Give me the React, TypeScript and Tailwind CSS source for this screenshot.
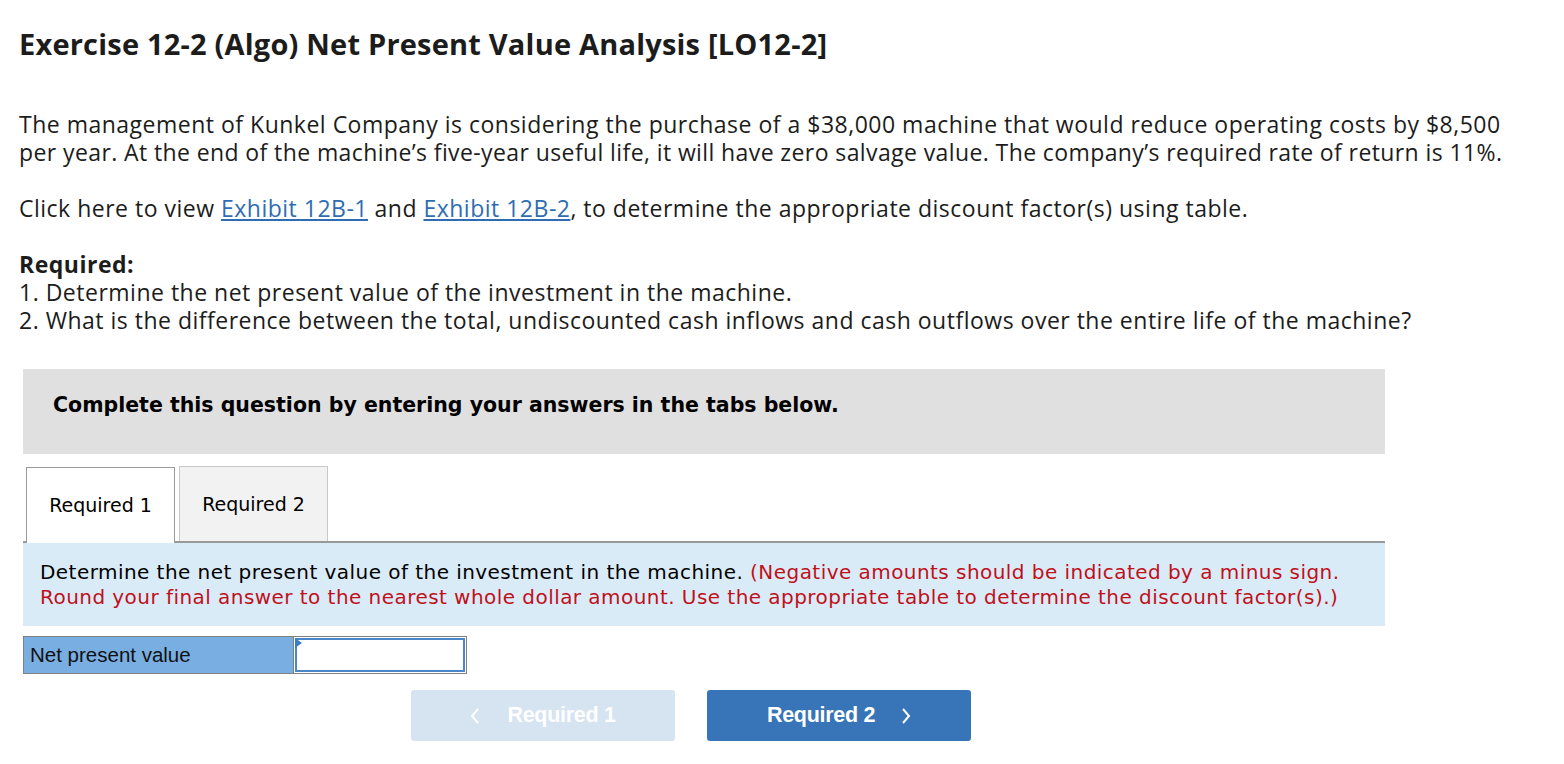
export default function App() {
  return (
    <div className="min-h-screen bg-white text-[#1c1c1c] font-['Open_Sans',sans-serif] px-[19px]">
      {/* Heading */}
      <h1 className="pt-[26px] text-[29px] font-bold leading-[36px] tracking-[0.2px] whitespace-nowrap">
        Exercise 12-2 (Algo) Net Present Value Analysis [LO12-2]
      </h1>

      {/* Problem text */}
      <div className="mt-[48px] text-[23px] leading-[28px] tracking-[0.5px] whitespace-nowrap">
        <p>
          The management of Kunkel Company is considering the purchase of a $38,000 machine that would reduce operating costs by $8,500
          <br />
          <span className="tracking-[0.4px]">
            per year. At the end of the machine’s five-year useful life, it will have zero salvage value. The company’s required rate of return is 11%.
          </span>
        </p>
        <p className="mt-[28px]">
          Click here to view{" "}
          <a href="#" className="text-[#2e6db4] underline underline-offset-2">Exhibit 12B-1</a> and{" "}
          <a href="#" className="text-[#2e6db4] underline underline-offset-2">Exhibit 12B-2</a>, to determine the appropriate discount factor(s) using table.
        </p>
        <div className="mt-[28px]">
          <p className="font-bold">Required:</p>
          <p>1. Determine the net present value of the investment in the machine.</p>
          <p>2. What is the difference between the total, undiscounted cash inflows and cash outflows over the entire life of the machine?</p>
        </div>
      </div>

      {/* Question panel */}
      <div className="ml-[4px] w-[1362px] mt-[35px] font-['DejaVu_Sans',Verdana,sans-serif]">
        <div className="h-[85px] bg-[#e0e0e0] flex items-center px-[30px] pb-[12px]">
          <p className="text-[20.5px] font-bold text-black">Complete this question by entering your answers in the tabs below.</p>
        </div>

        {/* Tabs */}
        <div className="mt-[12px] flex items-end gap-[4px] border-b-2 border-[#999999] pl-[3px]">
          <button className="h-[76px] w-[149px] -mb-[2px] bg-white border border-b-0 border-[#999999] text-[19px] text-black">
            Required 1
          </button>
          <button className="h-[75px] w-[149px] bg-[#f2f2f2] border border-b-0 border-[#c8c8c8] text-[19px] text-black">
            Required 2
          </button>
        </div>

        {/* Instructions */}
        <div className="h-[83px] bg-[#daebf8] px-[17px] pt-[17px] text-[20px] leading-[25px] text-black whitespace-nowrap tracking-[0.45px]">
          Determine the net present value of the investment in the machine.{" "}
          <span className="text-[#c0101a]">
            (Negative amounts should be indicated by a minus sign.
            <br />
            Round your final answer to the nearest whole dollar amount. Use the appropriate table to determine the discount factor(s).)
          </span>
        </div>

        {/* Answer row */}
        <div className="mt-[10px] flex w-[444px] h-[38px] border border-[#808080]">
          <div className="w-[270px] bg-[#78aee2] border-r border-[#808080] flex items-center pl-[6px] font-['Liberation_Sans',Arial,sans-serif] text-[20.5px] text-[#111]">
            Net present value
          </div>
          <div className="relative flex-1 p-[1px]">
            <div className="absolute left-[1px] top-[1px] w-0 h-0 border-t-[5px] border-b-[5px] border-l-[7px] border-t-transparent border-b-transparent border-l-[#3a7cc7]"></div>
            <input className="w-full h-full border-2 border-[#4a86c8] outline-none bg-white" />
          </div>
        </div>

        {/* Nav buttons */}
        <div className="mt-[16px] flex justify-center gap-[32px] pr-[26px] font-['Liberation_Sans',Arial,sans-serif]">
          <button className="w-[264px] h-[51px] rounded-[3px] bg-[#d6e4f1] text-white text-[21.5px] font-bold flex items-center justify-center gap-[27px] tracking-[-0.3px]">
            <svg width="10" height="18" viewBox="0 0 10 18" fill="none" stroke="white" strokeWidth="2"><path d="M8 2 L2 9 L8 16" /></svg>
            Required 1
          </button>
          <button className="w-[264px] h-[51px] rounded-[3px] bg-[#3775b8] text-white text-[21.5px] font-bold flex items-center justify-center gap-[26px] tracking-[-0.3px]">
            Required 2
            <svg width="10" height="18" viewBox="0 0 10 18" fill="none" stroke="white" strokeWidth="2"><path d="M2 2 L8 9 L2 16" /></svg>
          </button>
        </div>
      </div>
    </div>
  );
}
